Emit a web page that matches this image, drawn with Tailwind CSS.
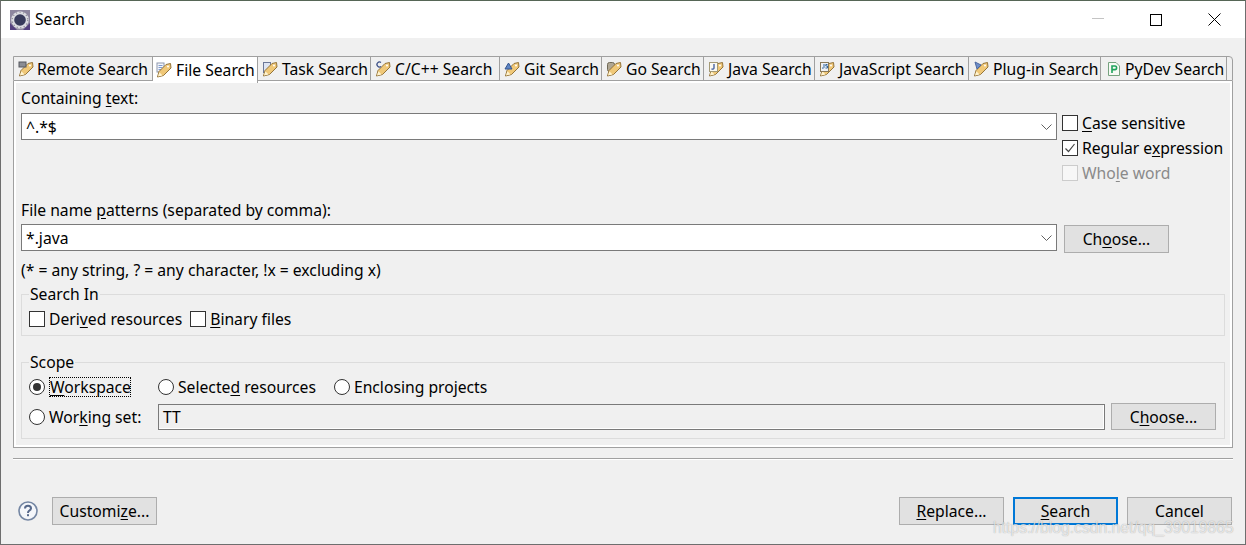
<!DOCTYPE html>
<html lang="en">
<head>
    <meta charset="UTF-8">
    <title>Search</title>
    <script src="https://cdn.jsdelivr.net/npm/@tailwindcss/browser@4"></script>
</head>
<body class="bg-[#f0f0f0]">

<svg class="hidden">
    <symbol id="tag" viewBox="0 0 16 16">
        <path d="M1.5 15 L3 9.5 L10 2.5 L14.5 1.5 L15 6 L7.5 13.5 Z" fill="#f0c878" stroke="#94743a" stroke-width="1"/>
        <path d="M2 14.5 L3.3 10.3 L6.6 13.4 Z" fill="#fff3cf"/>
        <circle cx="12" cy="4.5" r="1" fill="#fff"/>
    </symbol>
</svg>

<div class="relative w-[1246px] h-[545px] overflow-hidden border border-[#6e6e6e] border-t-[#566656] font-['Noto_Sans',sans-serif] text-[15.7px] leading-5 text-black">

    <!-- title bar -->
    <div class="flex items-center h-[37px] bg-white pl-[9px]">
        <svg class="w-5 h-5" viewBox="0 0 20 20">
            <rect width="20" height="20" fill="#8d869f"/>
            <path d="M0 20 V13 L7 20 Z M20 20 V13 L13 20 Z" fill="#54407f"/>
            <circle cx="10" cy="10" r="8.8" fill="#dcdce2"/>
            <circle cx="10" cy="10" r="7.8" fill="none" stroke="#8a8a96" stroke-width="1.2" stroke-dasharray="1.2 2.4"/>
            <circle cx="10" cy="10" r="5.8" fill="#383b5c"/>
        </svg>
        <span class="ml-[5px] mb-[2px]">Search</span>
        <div class="ml-auto flex items-center">
            <div class="w-3 h-px mb-[2px] bg-[#c4c4c4] mr-[46px]"></div>
            <div class="w-3 h-3 border border-black mr-[46px]"></div>
            <svg class="w-[13px] h-[13px] mr-[24px]" viewBox="0 0 13 13"><path d="M.5 .5 L12.5 12.5 M12.5 .5 L.5 12.5" stroke="#000" stroke-width="1"/></svg>
        </div>
    </div>

    <!-- tab folder -->
    <div class="ml-3 mt-[18px] w-[1220px]">
        <div class="flex h-[25px] border border-[#a0a0a0] rounded-tr-[4px]">
            <div class="flex items-center w-[139px] pl-[4px] gap-[3px] border-r border-[#a0a0a0]">
                <svg class="w-4 h-4 shrink-0" viewBox="0 0 16 16"><use href="#tag"/><rect x="1" y="1" width="7" height="5" fill="#8b8d94" stroke="#56585f"/></svg>
                <span>Remote Search</span>
            </div>
            <div class="flex items-center w-[105px] h-[26px] pb-[1px] pl-[3px] gap-[4px] bg-white border-r border-[#a0a0a0]">
                <svg class="w-4 h-4 shrink-0" viewBox="0 0 16 16"><rect x="1" y="1" width="7" height="9" fill="#f4f6fb" stroke="#8d97ad"/><path d="M2.5 3.5h4M2.5 5.5h4M2.5 7.5h3" stroke="#7f9bcf"/><use href="#tag"/></svg>
                <span>File Search</span>
            </div>
            <div class="flex items-center w-[113px] pl-[4px] gap-[4px] border-r border-[#a0a0a0]">
                <svg class="w-4 h-4 shrink-0" viewBox="0 0 16 16"><rect x="1.5" y="1.5" width="7" height="10" fill="#dfe5f2" stroke="#6d7897"/><use href="#tag"/></svg>
                <span>Task Search</span>
            </div>
            <div class="flex items-center w-[129px] pl-[4px] gap-[4px] border-r border-[#a0a0a0]">
                <svg class="w-4 h-4 shrink-0" viewBox="0 0 16 16"><use href="#tag"/><path d="M6 1.5 A2.5 2.5 0 1 0 6 5.5" fill="none" stroke="#3b4f86" stroke-width="1.3"/></svg>
                <span>C/C++ Search</span>
            </div>
            <div class="flex items-center w-[102px] pl-[4px] gap-[4px] border-r border-[#a0a0a0]">
                <svg class="w-4 h-4 shrink-0" viewBox="0 0 16 16"><use href="#tag"/><path d="M1 8 L4.5 2 L8 8 Z" fill="#5f86c4" stroke="#34558f"/></svg>
                <span>Git Search</span>
            </div>
            <div class="flex items-center w-[102px] pl-[4px] gap-[4px] border-r border-[#a0a0a0]">
                <svg class="w-4 h-4 shrink-0" viewBox="0 0 16 16"><rect x="1.5" y="1.5" width="7" height="9" rx="2" fill="#b0a794" stroke="#6f6957"/><use href="#tag"/></svg>
                <span>Go Search</span>
            </div>
            <div class="flex items-center w-[111px] pl-[4px] gap-[4px] border-r border-[#a0a0a0]">
                <svg class="w-4 h-4 shrink-0" viewBox="0 0 16 16"><use href="#tag"/><rect x="1.5" y="1.5" width="8" height="9" fill="#fbfaf3" stroke="#a49a76"/><path d="M6 3 V7 Q6 8.5 3.5 8" fill="none" stroke="#3e5a9c" stroke-width="1.3"/></svg>
                <span>Java Search</span>
            </div>
            <div class="flex items-center w-[154px] pl-[4px] gap-[4px] border-r border-[#a0a0a0]">
                <svg class="w-4 h-4 shrink-0" viewBox="0 0 16 16"><use href="#tag"/><rect x="1.5" y="1.5" width="8" height="9" fill="#eef1f6" stroke="#8a7a58"/><path d="M5 3 V6.5 Q5 7.5 3 7 M8.5 3.5 H6.8 V5 H8.5 V7 H6.5" fill="none" stroke="#33679c"/></svg>
                <span>JavaScript Search</span>
            </div>
            <div class="flex items-center w-[132px] pl-[4px] gap-[4px] border-r border-[#a0a0a0]">
                <svg class="w-4 h-4 shrink-0" viewBox="0 0 16 16"><use href="#tag"/><path d="M2 1 L8 4 L4 8 Z" fill="#6f8fca" stroke="#4b679f"/></svg>
                <span>Plug-in Search</span>
            </div>
            <div class="flex items-center w-[126px] pl-[6px] gap-[4px] border-r border-[#a0a0a0]">
                <svg class="w-[14px] h-4 shrink-0" viewBox="0 0 14 16"><path d="M1.5 1.5 H9 L12.5 5 V14.5 H1.5 Z" fill="#f7faf5" stroke="#76a27f"/><path d="M5 12 V5 H8 Q9.6 5 9.6 6.8 Q9.6 8.6 8 8.6 H5" fill="none" stroke="#1fa35c" stroke-width="1.6"/></svg>
                <span>PyDev Search</span>
            </div>
        </div>

        <!-- page -->
        <div class="h-[367px] border border-t-0 border-[#a0a0a0]">
            <div class="h-full border-2 border-white pl-[5px]">
                <div class="flex">
                    <div class="w-[1036px] pt-[5px]">
                        <div>Containing <u class="underline-offset-2">t</u>ext:</div>
                        <div class="flex items-center justify-between mt-[5px] h-[27px] pl-[4px] pr-[3px] bg-white border border-[#7a7a7a]">
                            <span>^.*$</span>
                            <svg class="w-[11px] h-[6px] mr-[1px]" viewBox="0 0 11 6"><path d="M.5 .5 L5.5 5.5 L10.5 .5" fill="none" stroke="#606060"/></svg>
                        </div>
                    </div>
                    <div class="ml-[5px] mt-[27px]">
                        <div class="flex items-center h-[25px]">
                            <div class="w-4 h-4 bg-white border border-[#333]"></div>
                            <span class="ml-[4px]"><u class="underline-offset-2">C</u>ase sensitive</span>
                        </div>
                        <div class="flex items-center h-[25px]">
                            <div class="w-4 h-4 bg-white border border-[#333] flex items-center justify-center">
                                <svg class="w-3 h-3" viewBox="0 0 12 12"><path d="M1.5 6.5 L4.5 9.5 L10.5 2" fill="none" stroke="#444" stroke-width="1.2"/></svg>
                            </div>
                            <span class="ml-[4px]">Regular e<u class="underline-offset-2">x</u>pression</span>
                        </div>
                        <div class="flex items-center h-[25px] text-[#8a8a8a]">
                            <div class="w-4 h-4 bg-[#f7f7f7] border border-[#cccccc]"></div>
                            <span class="ml-[4px]">Who<u class="underline-offset-2">l</u>e word</span>
                        </div>
                    </div>
                </div>

                <div class="mt-[15px]">File name <u class="underline-offset-2">p</u>atterns (separated by comma):</div>
                <div class="flex mt-[4px]">
                    <div class="flex items-center justify-between w-[1036px] h-[27px] pl-[4px] pr-[3px] bg-white border border-[#7a7a7a]">
                        <span>*.java</span>
                        <svg class="w-[11px] h-[6px] mr-[1px]" viewBox="0 0 11 6"><path d="M.5 .5 L5.5 5.5 L10.5 .5" fill="none" stroke="#606060"/></svg>
                    </div>
                    <button class="ml-[7px] mt-[1px] w-[105px] h-[28px] bg-[#e1e1e1] border border-[#adadad]">Ch<u class="underline-offset-2">o</u>ose...</button>
                </div>
                <div class="mt-[7px]">(* = any string, ? = any character, !x = excluding x)</div>

                <fieldset class="w-[1204px] h-[52px] mt-[4px] border border-[#dcdcdc]">
                    <legend class="ml-[7px] px-px">Search In</legend>
                    <div class="flex items-center h-5 mt-[5px] pl-[7px]">
                        <div class="w-4 h-4 bg-white border border-[#333]"></div>
                        <span class="ml-[4px]">Deri<u class="underline-offset-2">v</u>ed resources</span>
                        <div class="ml-[8px] w-4 h-4 bg-white border border-[#333]"></div>
                        <span class="ml-[4px]"><u class="underline-offset-2">B</u>inary files</span>
                    </div>
                </fieldset>

                <fieldset class="w-[1204px] h-[87px] mt-[16px] border border-[#dcdcdc]">
                    <legend class="ml-[7px] px-px">Scope</legend>
                    <div class="flex items-center h-5 mt-[5px] pl-[7px]">
                        <div class="flex items-center justify-center w-4 h-4 rounded-full bg-white border border-[#333]"><div class="w-2 h-2 rounded-full bg-[#333]"></div></div>
                        <span class="ml-[4px] w-[82px] h-5 border border-dotted border-black leading-[18px]"><u class="underline-offset-2">W</u>orkspace</span>
                        <div class="ml-[27px] w-4 h-4 rounded-full bg-white border border-[#333]"></div>
                        <span class="ml-[4px]">Selecte<u class="underline-offset-2">d</u> resources</span>
                        <div class="ml-[18px] w-4 h-4 rounded-full bg-white border border-[#333]"></div>
                        <span class="ml-[4px]">Enclosing projects</span>
                    </div>
                    <div class="flex items-center h-[27px] mt-[6px] pl-[7px]">
                        <div class="w-4 h-4 rounded-full bg-white border border-[#333]"></div>
                        <span class="ml-[4px] w-[109px]">Wor<u class="underline-offset-2">k</u>ing set:</span>
                        <div class="flex items-center w-[947px] h-[26px] pl-[4px] bg-[#f0f0f0] border border-[#7a7a7a] shadow-[inset_-1px_-1px_0_#fff]">TT</div>
                        <button class="ml-[6px] w-[105px] h-[27px] bg-[#e1e1e1] border border-[#adadad]">C<u class="underline-offset-2">h</u>oose...</button>
                    </div>
                </fieldset>
            </div>
        </div>

        <div class="mt-[10px] h-[2px] border-t border-[#a0a0a0] bg-white"></div>
    </div>

    <!-- button bar -->
    <div class="flex items-center mt-[37px] ml-[17px] mr-[13px]">
        <svg class="w-5 h-5" viewBox="0 0 20 20">
            <circle cx="10" cy="10" r="9" fill="#f4f6fa" stroke="#7486a3" stroke-width="1.6"/>
            <path d="M7 7.5 Q7 4.8 10 4.8 Q13 4.8 13 7.3 Q13 8.8 11 9.8 Q10 10.4 10 12" fill="none" stroke="#56688a" stroke-width="2"/>
            <rect x="9" y="13.2" width="2" height="2" fill="#56688a"/>
        </svg>
        <button class="ml-[14px] w-[105px] h-[28px] bg-[#e1e1e1] border border-[#adadad]">Customi<u class="underline-offset-2">z</u>e...</button>
        <button class="ml-auto w-[105px] h-[28px] bg-[#e1e1e1] border border-[#adadad]"><u class="underline-offset-2">R</u>eplace...</button>
        <button class="ml-[9px] w-[105px] h-[28px] bg-[#e1e1e1] border-2 border-[#0078d7]"><u class="underline-offset-2">S</u>earch</button>
        <button class="ml-[9px] w-[105px] h-[28px] bg-[#e1e1e1] border border-[#adadad]">Cancel</button>
    </div>

    <!-- watermark -->
    <div class="absolute left-[992px] top-[517px] font-['Liberation_Sans',sans-serif] text-[15.7px] text-white/70 [text-shadow:0_0_1px_rgba(0,0,0,0.35)]">https://blog.csdn.net/qq_39019865</div>
</div>

</body>
</html>
